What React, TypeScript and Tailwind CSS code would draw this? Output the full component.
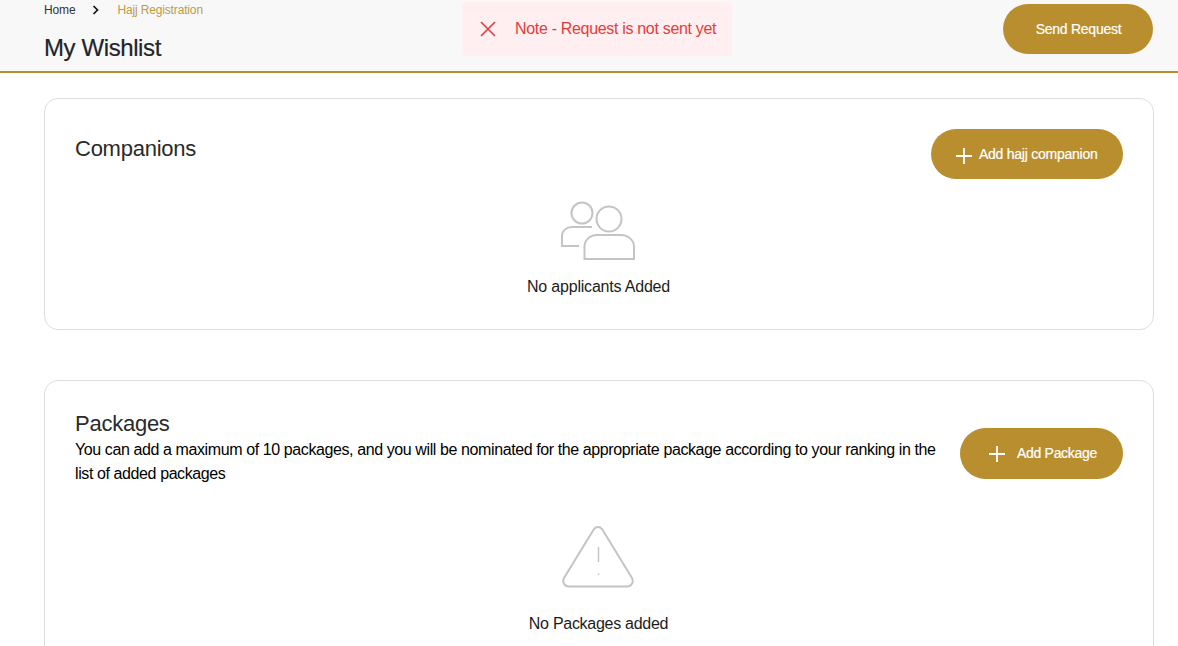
import React from "react";

const Plus = ({ className }: { className: string }) => (
  <svg viewBox="0 0 16 16" className={className} fill="none" stroke="#fff" strokeWidth="1.8">
    <path d="M8 0v16M0 8h16" />
  </svg>
);

export default function App() {
  return (
    <div className="h-[646px] overflow-hidden bg-white font-['Liberation_Sans',Arial,sans-serif] text-[#212529]">
      <header className="relative flex h-[73px] items-start justify-between border-b-2 border-[#b88e2f] bg-[#f8f8f8] pl-[44px] pr-[25px]">
        <div>
          <nav className="flex h-[20px] items-center text-[12px] tracking-[-0.15px]">
            <span className="text-[#333]">Home</span>
            <svg viewBox="0 0 8 10" className="ml-[17px] mr-[17px] h-[10px] w-[8px]" fill="none" stroke="#111" strokeWidth="1.7">
              <path d="M1.5 1l4 4-4 4" />
            </svg>
            <span className="text-[#c29a3f]">Hajj Registration</span>
          </nav>
          <h1 className="mt-[13px] text-[24px] leading-[30px] tracking-[-0.4px] [-webkit-text-stroke:0.2px_#212529]">My Wishlist</h1>
        </div>
        <div className="absolute left-[462px] top-[2px] flex h-[54px] w-[270px] items-center rounded-[4px] bg-[#ffeff0] pl-[18px] text-[#e23d3d]">
          <svg viewBox="0 0 16 16" className="h-[16px] w-[16px]" fill="none" stroke="#e23d3d" strokeWidth="1.6">
            <path d="M1 1l14 14M15 1L1 15" />
          </svg>
          <span className="ml-[19px] text-[16px] tracking-[-0.32px]">Note - Request is not sent yet</span>
        </div>
        <button className="mt-[4px] h-[50px] w-[150px] rounded-full bg-[#b88e2f] pl-[1px] text-[14px] tracking-[-0.25px] text-white [-webkit-text-stroke:0.2px_#fff]">
          Send Request
        </button>
      </header>

      <main className="flex flex-col gap-[50px] pl-[44px] pr-[24px] pt-[25px]">
        <section className="h-[232px] rounded-[14px] border border-[#dedede] px-[30px] pt-[30px]">
          <div className="flex items-start justify-between">
            <h2 className="mt-[5px] text-[22px] leading-[30px] tracking-[-0.25px] text-[#2a2a2a]">Companions</h2>
            <button className="flex h-[50px] w-[192px] items-center rounded-full bg-[#b88e2f] pl-[25px] text-[14px] tracking-[-0.25px] text-white [-webkit-text-stroke:0.2px_#fff]">
              <Plus className="mt-[3px] h-[16px] w-[16px]" />
              <span className="ml-[7px]">Add hajj companion</span>
            </button>
          </div>
          <div className="mt-[21px] flex flex-col items-center">
            <svg viewBox="0 0 76 60" className="-ml-[2px] h-[60px] w-[76px]" fill="none" stroke="#c4c4c4" strokeWidth="2">
              <circle cx="22" cy="13" r="10.500" />
              <circle cx="49" cy="19" r="12.500" />
              <path d="M32 27H12C6 27 2 31 2 36V46H19" />
              <path d="M24.500 59V47C24.500 40 30 35 37 35H61C68 35 74 40 74 47V59Z" />
            </svg>
            <p className="-ml-[1px] mt-[17px] text-[16px] leading-[20px] tracking-[-0.2px] text-[#1c1c1c]">No applicants Added</p>
          </div>
        </section>

        <section className="h-[300px] rounded-[14px] border border-[#dedede] px-[30px] pt-[29px]">
          <div className="flex items-start justify-between">
            <div className="w-[870px]">
              <h2 className="text-[22px] leading-[28px] tracking-[-0.25px] text-[#2a2a2a]">Packages</h2>
              <p className="text-[16px] leading-[24px] tracking-[-0.4px] text-black">
                You can add a maximum of 10 packages, and you will be nominated for the appropriate package according to your ranking in the list of added packages
              </p>
            </div>
            <button className="mt-[18px] flex h-[51px] w-[163px] items-center rounded-full bg-[#b88e2f] pl-[29px] text-[14px] tracking-[-0.3px] text-white [-webkit-text-stroke:0.2px_#fff]">
              <Plus className="h-[16px] w-[16px]" />
              <span className="ml-[12px]">Add Package</span>
            </button>
          </div>
          <div className="mt-[40px] flex flex-col items-center">
            <svg viewBox="0 0 72 62" className="-ml-[2px] h-[62px] w-[72px]" fill="none" stroke="#c4c4c4" strokeWidth="2">
              <path d="M32 3C34 .4 38 .4 40 3L70 52C72 56 69.500 60.500 65 60.500H7C2.500 60.500 0 56 2 52Z" strokeLinejoin="round" />
              <path d="M36.500 21V36" strokeWidth="1.500" />
              <path d="M36.500 47.500V49" strokeWidth="1.500" />
            </svg>
            <p className="-ml-[1px] mt-[26px] text-[16px] leading-[20px] tracking-[-0.28px] text-[#1c1c1c]">No Packages added</p>
          </div>
        </section>
      </main>
    </div>
  );
}
